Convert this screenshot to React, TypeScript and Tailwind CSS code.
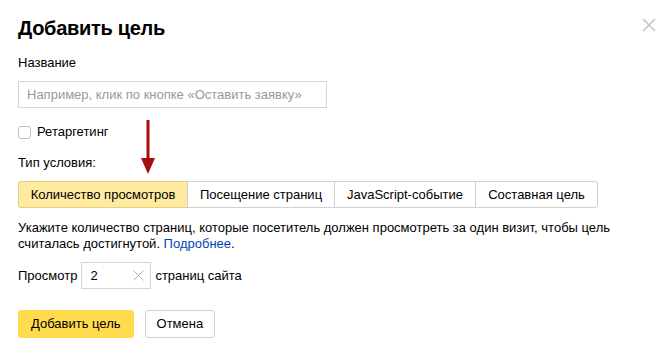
const tabs = [
  { label: "Количество просмотров", w: "w-[170px]" },
  { label: "Посещение страниц", w: "w-[147px]" },
  { label: "JavaScript-событие", w: "w-[141px]" },
  { label: "Составная цель", w: "w-[122px]" },
];

export default function App() {
  return (
    <div
      className="relative w-[672px] h-[352px] bg-white text-[13px] text-black overflow-hidden"
      style={{ fontFamily: '"Liberation Sans", Arial, sans-serif' }}
    >
      <button className="absolute left-[642px] top-[18px]">
        <svg width="14" height="14" viewBox="0 0 14 14">
          <path d="M1 1 L13 13 M13 1 L1 13" stroke="#c4c4c4" strokeWidth="1.6" />
        </svg>
      </button>

      <div className="pl-[18px] pt-[15px]">
        <h1 className="text-[20px] font-bold leading-[26px] tracking-[-0.3px]">Добавить цель</h1>

        <div className="mt-[14px] leading-[16px]">Название</div>
        <div className="mt-[10px] w-[309px] h-[27px] border border-[#d6d6d6] flex items-center px-[8px] text-[#999]">
          Например, клик по кнопке «Оставить заявку»
        </div>

        <label className="mt-[17px] flex items-center gap-[6px] leading-[14px]">
          <span className="w-[13px] h-[13px] border border-[#bdbdbd] rounded-[3px] bg-white" />
          Ретаргетинг
        </label>

        <div className="mt-[16px] leading-[16px]">Тип условия:</div>

        <div className="mt-[10px] flex w-fit h-[27px] border border-[#d0d0d0] rounded-[3px]">
          {tabs.map((t, i) => (
            <div
              key={t.label}
              className={
                i === 0
                  ? `${t.w} flex items-center justify-center bg-[#ffeba0] border border-[#e5cf7e] rounded-l-[3px] -m-px`
                  : `${t.w} flex items-center justify-center border-l border-[#d0d0d0]`
              }
            >
              {t.label}
            </div>
          ))}
        </div>

        <p className="mt-[12px] w-[600px] leading-[16px]">
          Укажите количество страниц, которые посетитель должен просмотреть за один визит, чтобы цель
          считалась достигнутой. <a className="text-[#04b]">Подробнее</a>.
        </p>

        <div className="mt-[10px] flex items-center gap-[4px]">
          <span>Просмотр</span>
          <div className="w-[70px] h-[27px] border border-[#d6d6d6] flex items-center justify-between pl-[8px] pr-[6px]">
            <span>2</span>
            <svg width="11" height="11" viewBox="0 0 11 11">
              <path d="M0.5 0.5 L10.5 10.5 M10.5 0.5 L0.5 10.5" stroke="#b0b0b0" strokeWidth="1" />
            </svg>
          </div>
          <span>страниц сайта</span>
        </div>

        <div className="mt-[21px] flex gap-[11px]">
          <button className="h-[28px] px-[13px] bg-[#ffdb4d] rounded-[3px]">Добавить цель</button>
          <button className="h-[28px] px-[11px] border border-[#d0d0d0] rounded-[3px] bg-white">Отмена</button>
        </div>
      </div>

      <svg className="absolute left-[141px] top-[120px]" width="14" height="54" viewBox="0 0 14 54">
        <line x1="7" y1="0" x2="7" y2="42" stroke="#a50d0d" strokeWidth="3" />
        <polygon points="0,38 14,38 7,54" fill="#a50d0d" />
      </svg>
    </div>
  );
}
